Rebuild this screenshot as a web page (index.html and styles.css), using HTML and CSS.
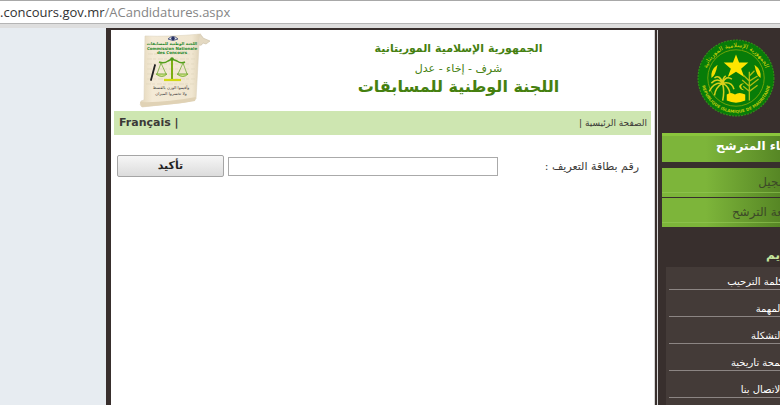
FILE: index.html
```html
<!DOCTYPE html>
<html lang="ar">
<head>
    <meta charset="UTF-8">
    <meta name="viewport" content="width=device-width, initial-scale=1.0">
    <title>اللجنة الوطنية للمسابقات</title>
    <link rel="stylesheet" href="styles.css">
</head>
<body>
    <div class="address">.concours.gov.mr<span class="path">/ACandidatures.aspx</span></div>

    <div class="page">
        <div class="main">
            <header class="banner">
                <svg class="scroll" viewBox="0 0 72 76" role="img" aria-label="Commission Nationale des Concours">
                    <defs>
                        <linearGradient id="paper" x1="0" x2="1">
                            <stop offset="0" stop-color="#e3d6b9"/>
                            <stop offset=".2" stop-color="#f4ead6"/>
                            <stop offset=".85" stop-color="#f0e6d0"/>
                            <stop offset="1" stop-color="#dccfb3"/>
                        </linearGradient>
                    </defs>
                    <path d="M58 2 Q62 0 64 5 L71 8 L67 11 L64 10 Q62 14 59 11 Z" fill="#e4d9c2" stroke="#c9bda3" stroke-width=".6"/>
                    <path d="M6 3 Q30 4 62 1 Q58 6 60 12 L57 66 Q48 70 30 71 L3 74 Q0 72 2 68 L5 67 Z" fill="url(#paper)" stroke="#ded3bd" stroke-width=".6"/>
                    <path d="M1 69 Q25 70 57 64 L56 68 Q40 71 3 74 Z" fill="#e0d2b5"/>
                    <path d="M9 21 H55 M8 26 H56 M8 31 H55 M8 36 H56 M8 41 H55 M8 46 H56 M7 51 H55" stroke="#e0d5bc" stroke-width=".7" stroke-dasharray="5 1 3 2"/>
                    <path d="M29 6 Q34 1 39 6 Q34 9 29 6 Z" fill="#dfe4ee" stroke="#4a5278" stroke-width=".9"/>
                    <circle cx="34" cy="5.500" r="1.800" fill="#263064"/>
                    <text class="logo-ar" x="33" y="12">اللجنة الوطنية للمسابقات</text>
                    <text class="logo-fr" x="33" y="17">Commission Nationale</text>
                    <text class="logo-fr" x="33" y="21">des Concours</text>
                    <path d="M16 32 L12 47" stroke="#222" stroke-width="1.800" stroke-linecap="round"/>
                    <path d="M20 29 Q25 31 29 28 L33 26 L38 28 Q42 31 46 29" fill="none" stroke="#54a01d" stroke-width="1.500"/>
                    <path d="M33 25 V46" stroke="#7bae12" stroke-width="2"/>
                    <circle cx="33" cy="26" r="1.800" fill="#4c971b"/>
                    <path d="M22 30 L18 41 M22 30 L27 41 M44 30 L39 41 M44 30 L48 41" stroke="#76ad38" stroke-width=".8"/>
                    <path d="M17 41 H28 Q23 46 17 41 Z M38 41 H49 Q44 46 38 41 Z" fill="#d2e48c" stroke="#69a523" stroke-width=".8"/>
                    <path d="M25 47 H42" stroke="#d2d912" stroke-width="2.200"/>
                    <text class="logo-verse" x="32" y="56">وأقيموا الوزن بالقسط</text>
                    <text class="logo-verse" x="32" y="62">ولا تخسروا الميزان</text>
                </svg>
                <div class="titles" dir="rtl">
                    <p class="republic">الجمهورية الإسلامية الموريتانية</p>
                    <p class="motto">شرف - إخاء - عدل</p>
                    <h1>اللجنة الوطنية للمسابقات</h1>
                </div>
            </header>

            <nav class="bar">
                <div><a class="lang" href="#">Français</a> |</div>
                <div class="home" dir="rtl"><a href="#">الصفحة الرئيسية</a> |</div>
            </nav>

            <form class="search" dir="rtl">
                <label for="card">رقم بطاقة التعريف :</label>
                <input type="text" id="card">
                <button type="button">تأكيد</button>
            </form>
        </div>

        <aside class="side">
            <div class="side-in" dir="rtl">
                <svg class="seal" viewBox="0 0 76 76" role="img" aria-label="الجمهورية الإسلامية الموريتانية">
                    <defs>
                        <path id="top" d="M8 38 A30 30 0 0 1 68 38"/>
                        <path id="bottom" d="M4 38 A34 34 0 0 0 72 38"/>
                    </defs>
                    <circle cx="38" cy="38" r="37" fill="#077c08" stroke="#329018" stroke-width="1" stroke-dasharray="2 1"/>
                    <circle cx="38" cy="38" r="27.500" fill="none" stroke="#85ac08" stroke-width=".8"/>
                    <text class="seal-ar"><textPath href="#top" startOffset="50%">الجمهورية الإسلامية الموريتانية</textPath></text>
                    <text class="seal-fr"><textPath href="#bottom" startOffset="50%">REPUBLIQUE ISLAMIQUE DE MAURITANIE</textPath></text>
                    <path d="M20 25 Q13 30 14 38 Q18 36 20 25 Z M56 25 Q63 30 62 38 Q58 36 56 25 Z" fill="#f2de00"/>
                    <path d="M38 15 L41 23 L50 23 L43 29 L46 37 L38 32 L30 37 L33 29 L26 23 L35 23 Z" fill="#ffe500"/>
                    <path d="M25 60 Q27 51 25 44 M25 43 Q20 37 14 43 M25 43 Q16 42 12 51 M25 43 Q18 47 17 55 M25 43 Q22 34 17 38 M25 43 Q28 35 34 39 M25 43 Q34 41 36 49 M25 43 Q32 47 32 54 M25 43 Q25 38 28 36" fill="none" stroke="#d8d01b" stroke-width="1.500"/>
                    <path d="M51 60 V32 M51 41 L45 35 M51 46 L44 40 M51 51 L45 46 M51 41 L59 36 M51 46 L60 39 M51 51 L59 45 M51 36 L56 31" fill="none" stroke="#aebd12" stroke-width="1.300"/>
                    <path d="M46 43 Q40 46 46 50 Q42 50 41 46 Q42 43 46 43 Z" fill="#d4d013"/>
                    <path d="M29 54 Q33 51 37 54 Q41 51 47 54 V60 Q38 64 29 60 Z" fill="#ffe000"/>
                </svg>
                <h2 class="space">فضاء المترشح</h2>
                <a class="tab" href="#">التسجيل</a>
                <a class="tab" href="#">متابعة الترشح</a>
                <h3>تقديم</h3>
                <ul class="menu">
                    <li><a href="#">كلمة الترحيب</a></li>
                    <li><a href="#">المهمة</a></li>
                    <li><a href="#">التشكلة</a></li>
                    <li><a href="#">لمحة تاريخية</a></li>
                    <li><a href="#">الاتصال بنا</a></li>
                </ul>
            </div>
        </aside>
    </div>
</body>
</html>
```

FILE: styles.css
```css
* { box-sizing: border-box; }
html, body { height: 100%; }
body { display: flex; flex-direction: column; margin: 0; overflow: hidden; font-family: "DejaVu Sans", sans-serif; color: #3b3937; background: #e7ecf1; }
a { color: inherit; text-decoration: none; }
h1, h2, h3, p, ul { margin: 0; padding: 0; }

/* browser address line */
.address { height: 28px; flex: none; border-top: 1px solid #a8a8a8; border-bottom: 4px solid #dedede; background: #fff; box-shadow: inset 0 -1px #b5b5b5; font: 13px/23px "Open Sans", sans-serif; color: #333; white-space: nowrap; }
.path { color: #858585; }

.page { display: flex; flex: 1; min-height: 0; margin-left: 106px; border-left: 5px solid #382f2d; border-top: 2px solid #382f2d; background: #382f2d; }
.main { flex: 1; min-width: 0; padding: 0 3px; background: #fff; }

/* header */
.banner { display: grid; grid-template-columns: 152px 1fr; height: 81px; padding-top: 3px; }
.scroll { width: 72px; height: 76px; margin-left: 25px; }
.logo-ar { font: bold 4px "DejaVu Sans", sans-serif; fill: #26872b; text-anchor: middle; }
.logo-fr { font: bold 4px "DejaVu Sans", sans-serif; fill: #26872b; text-anchor: middle; }
.logo-verse { font: 4px "DejaVu Sans", sans-serif; fill: #333; text-anchor: middle; }
.titles { padding-top: 5px; text-align: center; color: #45800f; white-space: nowrap; }
.republic { font-size: 11px; font-weight: bold; line-height: 22px; }
.motto { font-size: 11px; line-height: 18px; }
h1 { font-size: 16px; line-height: 18px; }

.bar { display: flex; justify-content: space-between; height: 24px; padding: 0 4px 0 5px; background: #cee6b1; font-size: 11px; font-weight: bold; line-height: 24px; }
.home { font-size: 9px; font-weight: normal; }

/* identity card form */
.search { display: flex; align-items: center; gap: 4px; padding: 20px 12px 0 3px; }
.search label { flex: 1; font-size: 11px; white-space: nowrap; }
.search input { width: 270px; height: 19px; border: 1px solid #aaa; background: #fff; }
.search button { width: 107px; height: 22px; padding: 0; border: 1px solid #a5a5a5; border-radius: 2px; background: linear-gradient(#f6f6f6, #dcdcdc); font: bold 11px/18px "DejaVu Sans", sans-serif; color: #222; }

/* right column, runs past the window edge */
.side { flex: none; width: 126px; overflow: hidden; border-left: 4px double #d5d5d5; }
.side-in { width: 150px; padding: 9px 0 0 4px; white-space: nowrap; }
.seal { display: block; width: 78px; height: 78px; margin-right: 33px; }
.seal-ar { font: 6px "DejaVu Sans", sans-serif; fill: #d8d40b; text-anchor: middle; }
.seal-fr { font: bold 4px "DejaVu Sans", sans-serif; fill: #bdc80e; text-anchor: middle; }
.space { height: 29px; margin-top: 16px; margin-bottom: 6px; padding-right: 8px; border-top: 3px solid #8ac63c; background: linear-gradient(90deg, #7db53a 30%, #48751d); font-size: 12px; line-height: 20px; color: #fff; }
.tab { display: block; height: 29px; margin-bottom: 1px; padding-right: 8px; background: linear-gradient(transparent 24px, #94c95699 24px, #94c95699 25px, transparent 25px), linear-gradient(90deg, #7db53a 30%, #48751d); font-size: 12px; line-height: 28px; color: #3d4a28; }
h3 { margin-top: 16px; padding-right: 8px; font-size: 12px; line-height: 24px; color: #c5e59d; }
.menu { margin-left: 4px; padding: 0 0 20px 3px; background: #443b38; list-style: none; font-size: 10px; color: #fff; }
.menu li { padding: 12px 25px 0 0; border-bottom: 1px solid #8c8583; line-height: 14px; }
.menu li:first-child { padding-top: 8px; }
```
